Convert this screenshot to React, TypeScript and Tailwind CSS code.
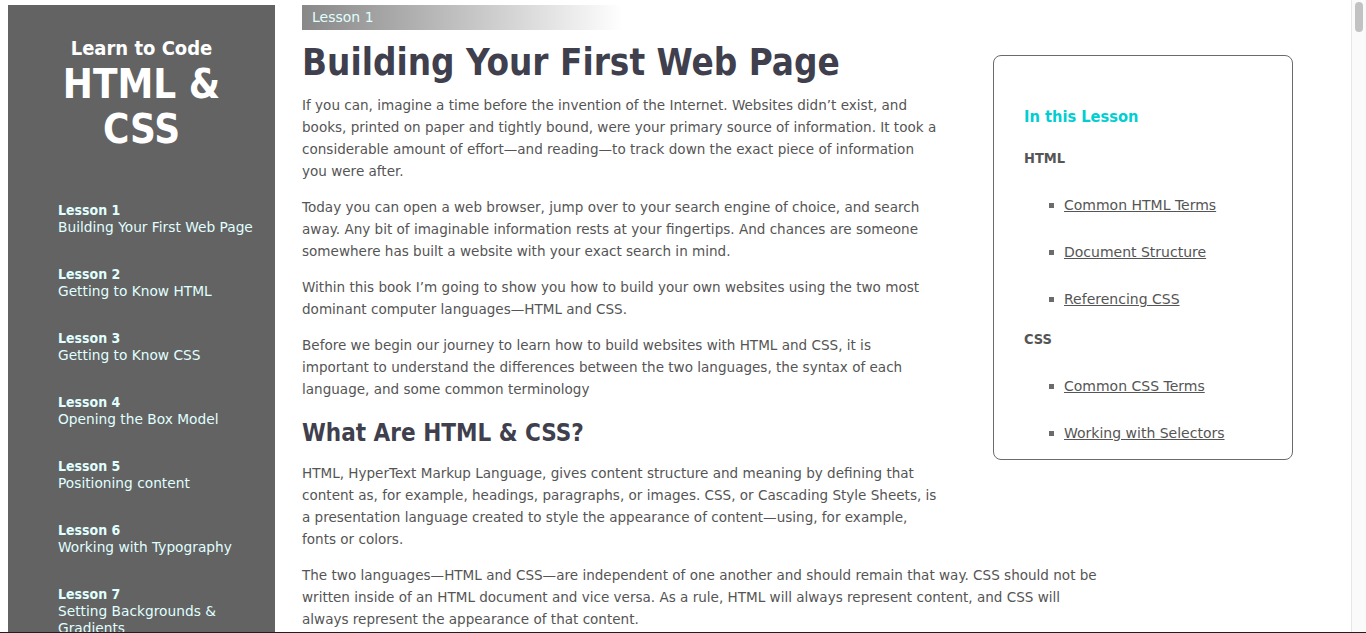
const LESSONS = [
  { n: 1, title: "Building Your First Web Page" },
  { n: 2, title: "Getting to Know HTML" },
  { n: 3, title: "Getting to Know CSS" },
  { n: 4, title: "Opening the Box Model" },
  { n: 5, title: "Positioning content" },
  { n: 6, title: "Working with Typography" },
  { n: 7, title: "Setting Backgrounds & Gradients" },
  { n: 8, title: "Creating Lists" },
];

const TOC = [
  { group: "HTML", items: ["Common HTML Terms", "Document Structure", "Referencing CSS"] },
  { group: "CSS", items: ["Common CSS Terms", "Working with Selectors"] },
];

// condensed face for bold headings, regular face for running text
const cond = "font-['DejaVu_Sans_Condensed','DejaVu_Sans',sans-serif]";

function Sidebar() {
  return (
    <nav className="w-[267px] shrink-0 bg-[#636363] overflow-hidden">
      <div className={`pt-[31px] text-center text-white font-bold ${cond}`}>
        <div className="text-[20px] leading-[24px]">Learn to Code</div>
        <div className="mt-[2px] text-[40px] leading-[45px]">
          HTML &amp;
          <br />
          CSS
        </div>
      </div>
      <ul className="mt-[50px] pl-[50px] pr-[12px] flex flex-col gap-[30px] text-[13.75px] leading-[17px] text-[#e0ffff]">
        {LESSONS.map((l) => (
          <li key={l.n}>
            <a href="#" className="block">
              <div className={`font-bold text-[14px] ${cond}`}>Lesson {l.n}</div>
              <div>{l.title}</div>
            </a>
          </li>
        ))}
      </ul>
    </nav>
  );
}

function LessonBox() {
  return (
    <aside className="float-right ml-[53px] mt-[25px] mb-[96px] w-[300px] rounded-[8px] border border-[#6b6b6b] pt-[50px] pb-[15px] pl-[30px] text-[14px] leading-[22px]">
      <h3 className={`text-[16.3px] font-bold text-[#00ced1] ${cond}`}>In this Lesson</h3>
      {TOC.map((g, gi) => (
        <div key={g.group} className={gi === 0 ? "mt-[19px]" : "mt-[18px]"}>
          <h4 className={`font-bold text-[14.5px] text-[#555] ${cond}`}>{g.group}</h4>
          <ul className="flex flex-col gap-[25px] mt-[25px]">
            {g.items.map((item) => (
              <li key={item} className="flex items-center gap-[10px] pl-[25px]">
                <span className="w-[5px] h-[5px] bg-[#6b6b6b]" />
                <a href="#" className="underline text-[#555]">{item}</a>
              </li>
            ))}
          </ul>
        </div>
      ))}
    </aside>
  );
}

function Content() {
  return (
    <main className="flex-1 overflow-hidden pl-[27px] pr-[58px]">
      <div className="w-[320px] h-[25px] bg-gradient-to-r from-[#888] to-white pl-[10px] text-[14px] leading-[25px] text-[#e0ffff]">
        Lesson 1
      </div>
      <LessonBox />
      <h1 className={`mt-[11px] mb-[9px] text-[36.5px] leading-[44px] font-bold text-[#3f3f4e] ${cond}`}>
        Building Your First Web Page
      </h1>
      <div className="max-w-[800px] text-[13.55px] leading-[22px] text-[#555]">
        <p className="mb-[14px]">
          If you can, imagine a time before the invention of the Internet. Websites didn’t exist, and books, printed on
          paper and tightly bound, were your primary source of information. It took a considerable amount of effort—and
          reading—to track down the exact piece of information you were after.
        </p>
        <p className="mb-[14px]">
          Today you can open a web browser, jump over to your search engine of choice, and search away. Any bit of
          imaginable information rests at your fingertips. And chances are someone somewhere has built a website with
          your exact search in mind.
        </p>
        <p className="mb-[14px]">
          Within this book I’m going to show you how to build your own websites using the two most dominant computer
          languages—HTML and CSS.
        </p>
        <p className="mb-[14px]">
          Before we begin our journey to learn how to build websites with HTML and CSS, it is important to understand
          the differences between the two languages, the syntax of each language, and some common terminology
        </p>
        <h2 className={`mt-[18px] mb-[14px] text-[24px] leading-[30px] font-bold text-[#3f3f4e] ${cond}`}>
          What Are HTML &amp; CSS?
        </h2>
        <p className="mb-[14px]">
          HTML, HyperText Markup Language, gives content structure and meaning by defining that content as, for
          example, headings, paragraphs, or images. CSS, or Cascading Style Sheets, is a presentation language created
          to style the appearance of content—using, for example, fonts or colors.
        </p>
        <p className="mb-[14px]">
          The two languages—HTML and CSS—are independent of one another and should remain that way. CSS should not be
          written inside of an HTML document and vice versa. As a rule, HTML will always represent content, and CSS
          will always represent the appearance of that content.
        </p>
      </div>
    </main>
  );
}

function Scrollbar() {
  return (
    <div className="w-[15px] shrink-0 bg-[#fafafa] border-l border-[#e6e6e6] pt-[2px] flex justify-center">
      <div className="w-[8px] h-[30px] rounded-full bg-[#c2c2c2]" />
    </div>
  );
}

export default function App() {
  return (
    <div className="flex h-[633px] bg-white border-b border-[#1f1f1f] overflow-hidden font-['DejaVu_Sans',Verdana,sans-serif]">
      <div className="flex flex-1 pt-[5px] pl-[8px] min-w-0">
        <Sidebar />
        <Content />
      </div>
      <Scrollbar />
    </div>
  );
}
